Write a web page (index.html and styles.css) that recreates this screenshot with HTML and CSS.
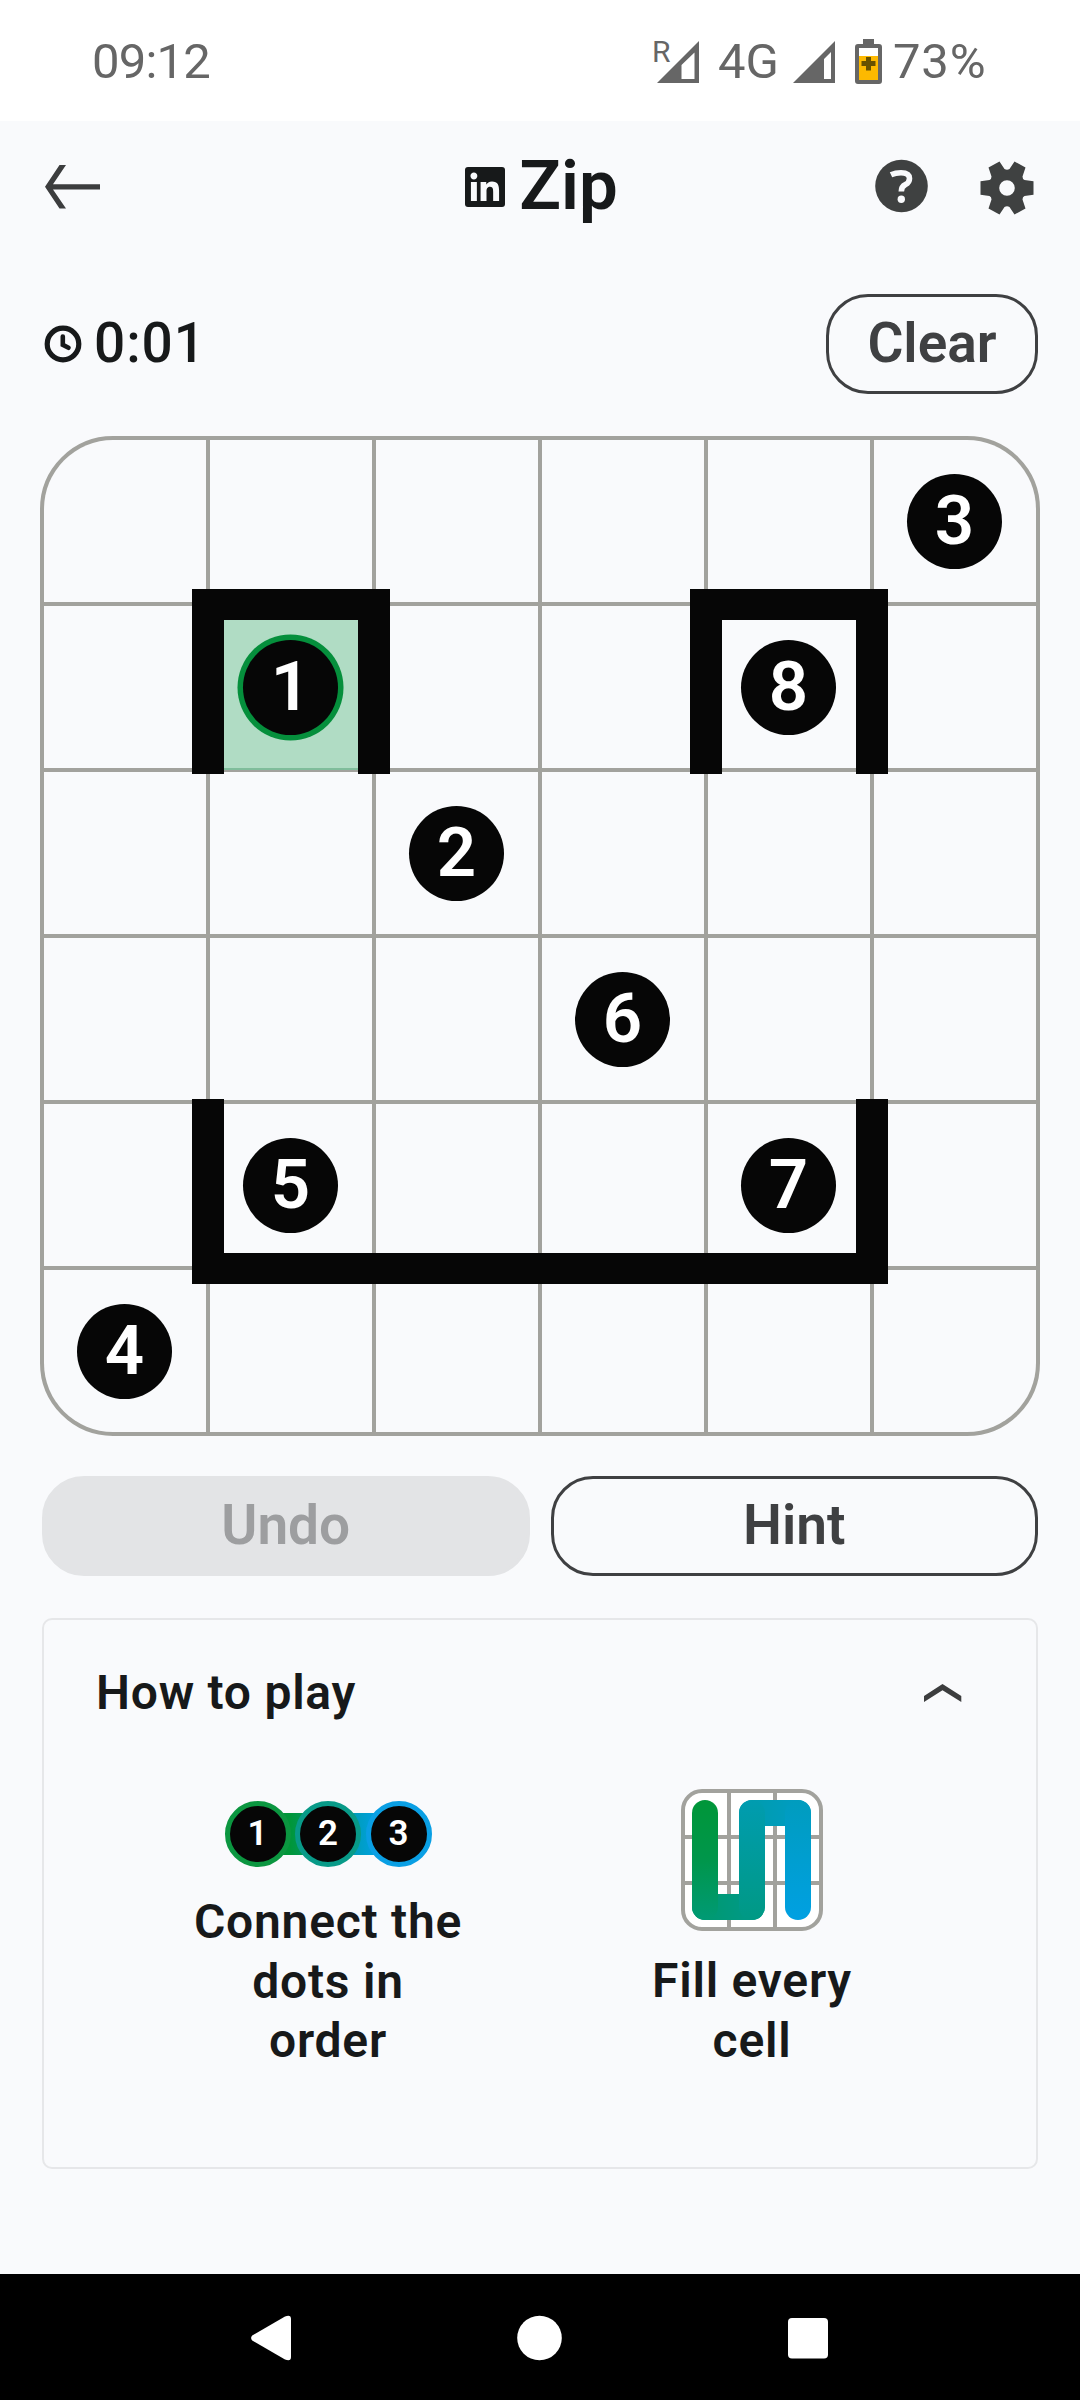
FILE: index.html
```html
<!DOCTYPE html>
<html lang="en">
<head>
<meta charset="utf-8">
<title>Zip</title>
<link rel="stylesheet" href="styles.css">
</head>
<body>
<div class="screen">
  <div class="status">
    <span class="clock">09:12</span>
    <div class="status-right">
      <svg class="signal-roam" viewBox="0 0 44 46" width="44" height="46"><path fill="#666" fill-rule="evenodd" d="M44 2V44H2zM39.500 13.500L26.500 26V40H39.500z"/></svg>
      <span class="roam">R</span>
      <span class="net">4G</span>
      <svg class="signal" viewBox="0 0 42 46" width="42" height="46"><path fill="#666" fill-rule="evenodd" d="M42 2V44H0zM38 13L31 20V40H38z"/></svg>
      <svg class="battery" viewBox="0 0 27 46" width="27" height="46"><path fill="#666" d="M8 0H19V5H24Q27 5 27 8V42Q27 45 24 45H3Q0 45 0 42V8Q0 5 3 5H8z"/><path fill="#fff" d="M4 9H23V17H4z"/><path fill="#fdb900" d="M4 17H23V41H4z"/><path fill="#665000" d="M11 18H16V22H20.500V27H16V31.500H11V27H6.500V22H11z"/></svg>
      <span class="pct">73%</span>
    </div>
  </div>

  <header class="header">
    <svg class="back" viewBox="0 0 56 44" width="56" height="44"><path fill="#3c3d3e" d="M0 21.800L14.500 0H21L8 19.200H55V24.400H8L21 43.600H14.500z"/></svg>
    <div class="title">
      <svg viewBox="0 0 24 24" width="40" height="40"><rect width="24" height="24" rx="1.800" fill="#17191a"/><path fill="#f9fafc" d="M20.447 20.452h-3.554v-5.569c0-1.328-.027-3.037-1.852-3.037-1.853 0-2.136 1.445-2.136 2.939v5.667H9.351V9h3.414v1.561h.046c.477-.9 1.637-1.850 3.370-1.850 3.601 0 4.267 2.370 4.267 5.455v6.286zM5.337 7.433c-1.144 0-2.063-.926-2.063-2.065 0-1.138.92-2.063 2.063-2.063 1.140 0 2.064.925 2.064 2.063 0 1.139-.925 2.065-2.064 2.065zm1.782 13.019H3.555V9h3.564v11.452z"/></svg>
      <h1>Zip</h1>
    </div>
    <div class="actions">
      <svg viewBox="0 0 54 54" width="54" height="54"><circle cx="26.500" cy="27" r="26.300" fill="#3f4141"/><path d="M16 15.800Q20.500 13.700 26 13.700Q34.500 13.700 34.500 19.500Q34.500 23.500 30.500 25.500Q26.300 27.500 26.300 32.500" fill="none" stroke="#f9fafc" stroke-width="5.600"/><circle cx="26.300" cy="40.200" r="3.700" fill="#f9fafc"/></svg>
      <svg class="gear" viewBox="-27 -27 54 54" width="54" height="54"><path fill="#3f4141" fill-rule="evenodd" d="M-18.500 -20.500L-7.500 -26.500L-2.500 -19Q0 -17.500 2.500 -19L7.500 -26.500L18.500 -20.500L15.500 -11.500Q15.500 -8.500 17.500 -8L26.500 -6.800V6.800L17.500 8Q15.500 8.500 15.500 11.500L18.500 20.500L7.500 26.500L2.500 19Q0 17.500 -2.500 19L-7.500 26.500L-18.500 20.500L-15.500 11.500Q-15.500 8.500 -17.500 8L-26.500 6.800V-6.800L-17.500 -8Q-15.500 -8.500 -15.500 -11.500zM0 -7.800A7.800 7.800 0 1 0 0 7.800A7.800 7.800 0 1 0 0 -7.800z"/></svg>
    </div>
  </header>

  <main class="game">
    <div class="toolbar">
      <div class="timer">
        <svg viewBox="0 0 38 38" width="38" height="38"><circle cx="19" cy="19" r="15.800" fill="none" stroke="#17191a" stroke-width="5.200"/><path d="M18.800 11.500V19.800L24.500 22.800" fill="none" stroke="#17191a" stroke-width="4.600" stroke-linecap="round"/></svg>
        <span>0:01</span>
      </div>
      <button class="btn btn-clear">Clear</button>
    </div>

    <div class="board">
      <i></i><i></i><i></i><i></i><i></i><i><b>3</b></i>
      <i></i><i class="filled"><b class="active">1</b></i><i></i><i></i><i><b>8</b></i><i></i>
      <i></i><i></i><i><b>2</b></i><i></i><i></i><i></i>
      <i></i><i></i><i></i><i><b>6</b></i><i></i><i></i>
      <i></i><i><b>5</b></i><i></i><i></i><i><b>7</b></i><i></i>
      <i><b>4</b></i><i></i><i></i><i></i><i></i><i></i>
      <div class="wall wall-a"></div>
      <div class="wall wall-b"></div>
      <div class="wall wall-c"></div>
    </div>

    <div class="controls">
      <button class="btn btn-undo">Undo</button>
      <button class="btn">Hint</button>
    </div>

    <section class="card">
      <div class="card-head">
        <h2>How to play</h2>
        <svg viewBox="0 0 38 18" width="38" height="18"><path fill="#3c3d3e" d="M0 12L18.500 0L37.300 12V18L18.500 6.200L0 18z"/></svg>
      </div>
      <div class="tips">
        <div class="tip tip-dots">
          <div class="dots"><b>1</b><b>2</b><b>3</b></div>
          <p>Connect the<br>dots in<br>order</p>
        </div>
        <div class="tip tip-fill">
          <svg viewBox="0 0 142 142" width="142" height="142">
            <defs>
              <linearGradient id="g1" gradientUnits="userSpaceOnUse" x1="20" y1="11" x2="28" y2="131"><stop offset="0" stop-color="#009639"/><stop offset=".5" stop-color="#00964b"/><stop offset="1" stop-color="#009a75"/></linearGradient>
              <linearGradient id="g2" gradientUnits="userSpaceOnUse" x1="24" y1="0" x2="71" y2="0"><stop offset="0" stop-color="#009970"/><stop offset="1" stop-color="#009988"/></linearGradient>
              <linearGradient id="g3" gradientUnits="userSpaceOnUse" x1="0" y1="131" x2="0" y2="11"><stop offset="0" stop-color="#009984"/><stop offset="1" stop-color="#009cb0"/></linearGradient>
              <linearGradient id="g4" gradientUnits="userSpaceOnUse" x1="71" y1="0" x2="117" y2="0"><stop offset="0" stop-color="#009cae"/><stop offset="1" stop-color="#009cc2"/></linearGradient>
              <linearGradient id="g5" gradientUnits="userSpaceOnUse" x1="0" y1="11" x2="0" y2="131"><stop offset="0" stop-color="#009cbe"/><stop offset="1" stop-color="#00a0e2"/></linearGradient>
            </defs>
            <rect x="2" y="2" width="138" height="138" rx="19" fill="#fff" stroke="#a2a29d" stroke-width="4"/>
            <path d="M48 4V138M94 4V138M4 48H138M4 94H138" stroke="#a2a29d" stroke-width="4"/>
            <g fill="none" stroke-width="26" stroke-linecap="round">
              <path d="M24 118H71" stroke="url(#g2)"/>
              <path d="M24 24V118" stroke="url(#g1)"/>
              <path d="M71 24H117" stroke="url(#g4)"/>
              <path d="M71 118V24" stroke="url(#g3)"/>
              <path d="M117 24V118" stroke="url(#g5)"/>
            </g>
          </svg>
          <p>Fill every<br>cell</p>
        </div>
      </div>
    </section>
  </main>

  <nav class="navbar">
    <svg viewBox="0 0 40 46" width="40" height="46"><path fill="#fff" d="M1.200 20.500L34 1.500Q40 -1 40 4V42Q40 47 34 44.500L1.200 25.500Q-1 23 1.200 20.500z"/></svg>
    <svg viewBox="0 0 46 46" width="46" height="46"><circle cx="22.500" cy="23" r="22.300" fill="#fff"/></svg>
    <svg viewBox="0 0 40 46" width="40" height="46"><rect x="0" y="3" width="40" height="40.500" rx="4" fill="#fff"/></svg>
  </nav>
</div>
</body>
</html>
```
FILE: styles.css
```css
* { box-sizing: border-box; margin: 0; padding: 0; }
body { background: #f9fafc; font-family: Roboto, sans-serif; color: #17191a; }
svg { display: block; flex: none; }

.screen { width: 1080px; height: 2400px; display: flex; flex-direction: column; background: #f9fafc; overflow: hidden; }

.status { height: 121px; flex: none; background: #fff; color: #666; display: flex; justify-content: space-between; padding: 33px 94px 0 92px; font-size: 49px; font-weight: 450; line-height: 58px; }
.clock { letter-spacing: -.8px; }
.status-right { display: flex; position: relative; }
.status-right svg { margin-top: 6px; }
.signal-roam { margin-right: 19px; }
.roam { position: absolute; left: -3px; top: 1px; font-size: 30px; font-weight: 400; line-height: 36px; }
.net { width: 75px; }
.signal { margin-right: 20px; }
.battery { margin-right: 11px; }
.pct { width: 93px; white-space: nowrap; letter-spacing: .8px; }

.header { height: 131px; flex: none; display: grid; grid-template-columns: 1fr auto 1fr; align-items: center; padding: 0 46px 0 45px; }
.title { display: flex; align-items: center; gap: 14px; padding-left: 4px; }
.title h1 { font-size: 69px; line-height: 80px; font-weight: 600; margin-top: -2px; }
.actions { display: flex; justify-content: flex-end; gap: 51px; }
.gear { margin-top: 2px; }

.game { flex: 1; padding: 42px 40px 0; }
.toolbar { display: flex; justify-content: space-between; align-items: center; padding: 0 2px 0 4px; height: 100px; }
.timer { display: flex; align-items: center; gap: 12px; font-size: 55px; font-weight: 540; line-height: 64px; letter-spacing: .9px; }
.timer span { margin-top: -2px; }

.btn { height: 100px; border: 3px solid #3f4042; border-radius: 42px; background: transparent; color: #3f4042; font: 560 55px/64px Roboto, sans-serif; text-align: center; padding-bottom: 3px; }
.btn-clear { width: 212px; }
.btn-undo { border-color: #e3e4e6; background: #e3e4e6; color: #9d9ea0; }

.board { position: relative; width: 1000px; height: 1000px; margin-top: 42px; display: grid; grid-template: repeat(6, 162px) / repeat(6, 162px); gap: 4px; border: 4px solid #a2a29d; border-radius: 73px; background: #a2a29d; overflow: hidden; }
.board i { display: flex; align-items: center; justify-content: center; background: #f9fafc; font-style: normal; padding-right: 1px; }
.board b { width: 95px; height: 95px; border-radius: 50%; background: #060606; color: #fff; font-size: 69px; line-height: 93px; font-weight: 600; text-align: center; }
.board .filled { background: #b0dcc4; box-shadow: 0 2px #7fbd9b; }
.board .active { box-shadow: 0 0 0 5.500px #058f3c; }
.wall { position: absolute; width: 198px; height: 185px; border: 0 solid #060606; border-width: 31px 32px 0; }
.wall-a { left: 148px; top: 149px; }
.wall-b { left: 646px; top: 149px; }
.wall-c { left: 148px; top: 659px; width: 696px; border-width: 0 32px 31px; }

.controls { display: grid; grid-template-columns: 1fr 1fr; gap: 21px; padding: 0 2px; margin-top: 40px; }

.card { margin: 42px 2px 0; height: 551px; border: 2px solid #e6e7e9; border-radius: 10px; padding: 43px 53px 0 52px; }
.card-head { display: flex; justify-content: space-between; align-items: center; height: 60px; padding-right: 21px; }
.card h2, .tip p { font-size: 48px; line-height: 59.500px; font-weight: 560; letter-spacing: .75px; }
.tips { display: grid; grid-template-columns: 464px 384px; padding-top: 66px; }
.tip { display: flex; flex-direction: column; align-items: center; text-align: center; }
.tip-dots { padding-top: 12px; }
.dots { width: 207px; height: 66px; display: flex; justify-content: space-between; background: linear-gradient(90deg, #009639 25%, #009988 50%, #00a0e2 82%) center / 150px 42px no-repeat; margin-bottom: 25px; }
.dots b { width: 66px; height: 66px; border: 5px solid #0b9640; border-radius: 50%; background: #060606; color: #fff; font-size: 35px; line-height: 56px; font-weight: 650; }
.dots b:nth-child(2) { border-color: #089a88; }
.dots b:nth-child(3) { border-color: #0a9fe4; }
.tip-fill p { margin-top: 20px; }

.navbar { height: 126px; flex: none; background: #000; display: flex; justify-content: space-between; align-items: center; padding: 1px 252px 0 251px; }
```
